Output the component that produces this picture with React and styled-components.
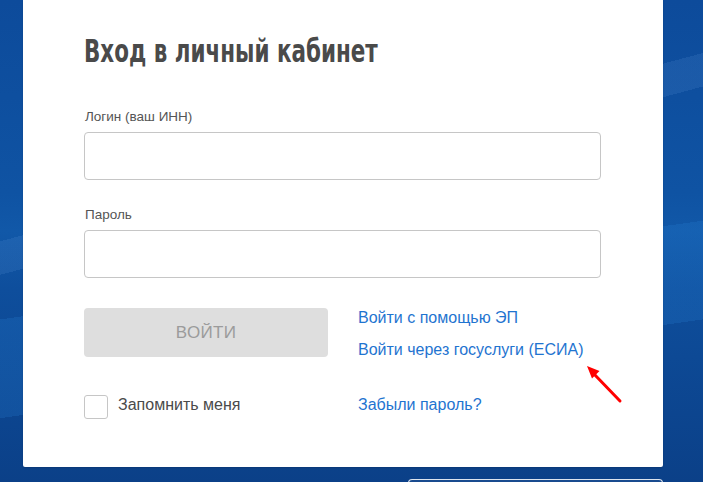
import React from 'react'
import styled, { createGlobalStyle } from 'styled-components'

const GlobalStyle = createGlobalStyle`
    html, body {
        margin: 0;
        padding: 0;
    }
    body {
        font-family: "Liberation Sans", Arial, sans-serif;
        background-color: #0e4c9c;
        background-image:
            linear-gradient(165deg, transparent 36%, rgba(110, 165, 230, 0.14) 36%, rgba(110, 165, 230, 0.14) 41%, transparent 41%),
            linear-gradient(172deg, transparent 55%, rgba(40, 130, 215, 0.22) 55%, rgba(40, 130, 215, 0.22) 72%, transparent 72%),
            linear-gradient(180deg, #0d4b9b 0%, #0f53a3 40%, #1158a8 48%, #0e4e9c 60%, #0b4088 100%);
        min-height: 100vh;
        overflow: hidden;
    }
`;

const Page = styled.div`
    height: 482px;
    padding-left: 23px;
    width: 640px;
`;

const Card = styled.section`
    position: relative;
    background: #fff;
    padding: 31px 62px 48px 61px;
    border-radius: 0 0 2px 2px;
    box-shadow: 0 1px 2px rgba(0, 0, 0, 0.15);
`;

const Title = styled.h1`
    display: inline-block;
    margin: 0 0 38px;
    font-family: "DejaVu Sans Condensed", "Liberation Sans", sans-serif;
    font-weight: bold;
    font-size: 32px;
    line-height: 40px;
    color: #4a4a4a;
    white-space: nowrap;
    transform: scaleX(0.745);
    transform-origin: left center;
`;

const Field = styled.div`
    display: flex;
    flex-direction: column;
    margin-bottom: ${props => props.last ? '30px' : '27px'};
`;

const Label = styled.label`
    font-size: 13.5px;
    line-height: 16px;
    color: #555;
    margin-bottom: 7px;
    padding-left: 1px;
`;

const Input = styled.input`
    box-sizing: border-box;
    height: 48px;
    width: 100%;
    border: 1px solid #c6c6c6;
    border-radius: 4px;
    background: #fff;
    padding: 0 12px;
    font-size: 16px;
    outline: none;
`;

const Actions = styled.div`
    display: grid;
    grid-template-columns: 244px 1fr;
    column-gap: 30px;
    row-gap: 36px;
`;

const SubmitButton = styled.button`
    height: 49px;
    border: none;
    border-radius: 4px;
    background: #dedede;
    color: #9b9b9b;
    font-family: "Liberation Sans", Arial, sans-serif;
    font-size: 17px;
    letter-spacing: 0.3px;
    cursor: default;
`;

const LinkList = styled.div`
    display: flex;
    flex-direction: column;
    gap: 14px;
    padding-top: 1px;
`;

const Link = styled.a`
    font-size: 16px;
    line-height: 18px;
    color: #1f74d0;
    text-decoration: none;
`;

const Remember = styled.label`
    display: flex;
    align-items: flex-start;
    gap: 10px;
    font-size: 16px;
    line-height: 18px;
    color: #4a4a4a;
`;

const Checkbox = styled.span`
    box-sizing: border-box;
    width: 24px;
    height: 24px;
    border: 1px solid #c6c6c6;
    border-radius: 3px;
    background: #fff;
`;

const RememberText = styled.span`
    padding-top: 1px;
`;

const Pointer = styled.svg`
    position: absolute;
    left: 560px;
    top: 360px;
    width: 45px;
    height: 46px;
    overflow: visible;
`;

const Footer = styled.div`
    display: flex;
    justify-content: flex-end;
    margin-top: 12px;
`;

const FooterBox = styled.div`
    width: 255px;
    height: 4px;
    box-sizing: border-box;
    border: 1px solid rgba(255, 255, 255, 0.85);
    border-bottom: none;
    border-radius: 4px 4px 0 0;
    background: rgba(255, 255, 255, 0.06);
`;

const App = () => {
    return (
        <>
            <GlobalStyle />
            <Page>
                <Card>
                    <Title>Вход в личный кабинет</Title>
                    <Field>
                        <Label>Логин (ваш ИНН)</Label>
                        <Input type="text" />
                    </Field>
                    <Field last>
                        <Label>Пароль</Label>
                        <Input type="password" />
                    </Field>
                    <Actions>
                        <SubmitButton>ВОЙТИ</SubmitButton>
                        <LinkList>
                            <Link href="#">Войти с помощью ЭП</Link>
                            <Link href="#">Войти через госуслуги (ЕСИА)</Link>
                        </LinkList>
                        <Remember>
                            <Checkbox />
                            <RememberText>Запомнить меня</RememberText>
                        </Remember>
                        <LinkList>
                            <Link href="#">Забыли пароль?</Link>
                        </LinkList>
                    </Actions>
                    {/* красная стрелка-указатель */}
                    <Pointer viewBox="0 0 45 46">
                        <line x1="37" y1="41" x2="11" y2="14" stroke="#ff0000" strokeWidth="3" strokeLinecap="round" />
                        <polygon points="4,6 16.5,11 9,18.5" fill="#ff0000" />
                    </Pointer>
                </Card>
                <Footer>
                    <FooterBox />
                </Footer>
            </Page>
        </>
    )
}

export default App
